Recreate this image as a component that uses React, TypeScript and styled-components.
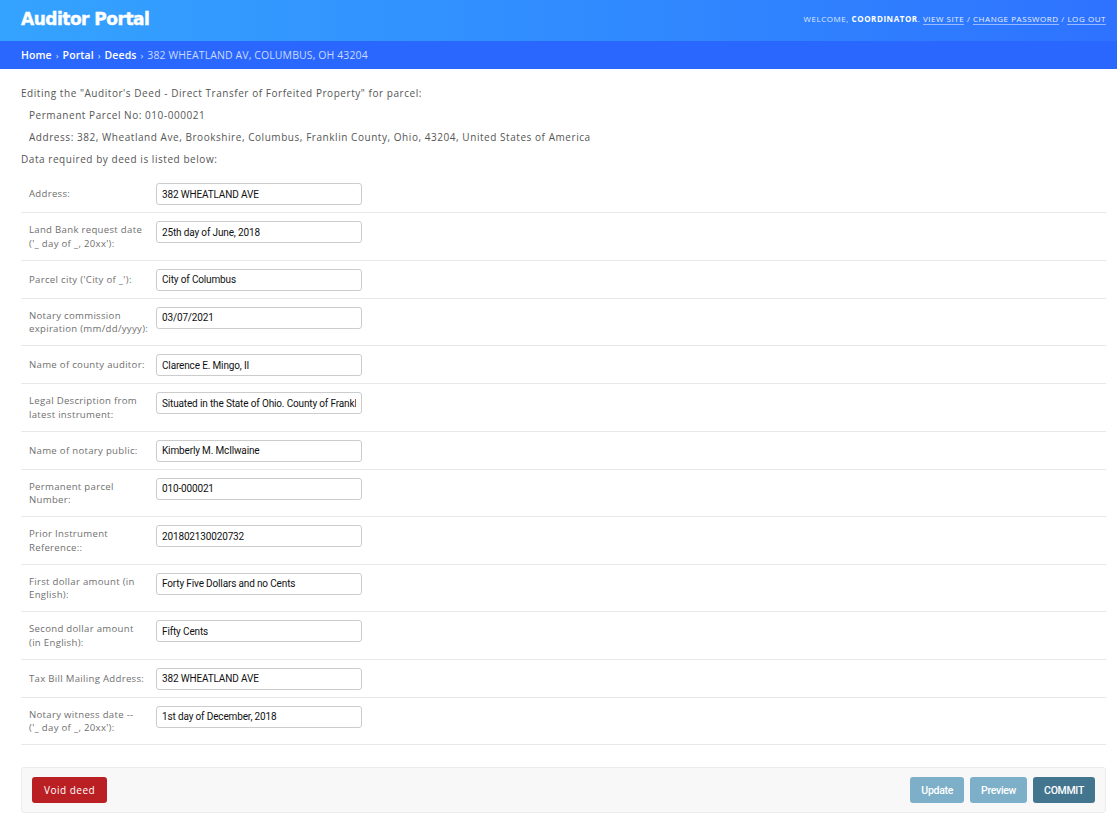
import React from "react";
import styled, { createGlobalStyle } from "styled-components";

const Global = createGlobalStyle`
  html, body { margin: 0; padding: 0; background: #fff; }
  body { font-family: "Open Sans", "DejaVu Sans", sans-serif; }
  * { box-sizing: border-box; }
`;

const Header = styled.header`
  height: 41px;
  background: linear-gradient(90deg, #34a3fe 0%, #3088ff 60%, #2e72ff 100%);
  display: flex;
  align-items: center;
  justify-content: space-between;
  padding: 0 11px 0 21px;
`;

const Brand = styled.h1`
  margin: 0;
  font-family: "DejaVu Sans", sans-serif;
  font-weight: 700;
  font-size: 17px;
  color: #fff;
  letter-spacing: -0.5px;
  margin-top: -3px;
  -webkit-text-stroke: 0.4px #fff;
`;

const UserTools = styled.div`
  font-family: "Open Sans", sans-serif;
  font-size: 8px;
  letter-spacing: 0.55px;
  text-transform: uppercase;
  color: #dfe8ff;
  margin-top: -4px;
  strong { color: #fff; font-weight: 700; }
  a {
    color: #e8efff;
    text-decoration: none;
    border-bottom: 1px solid rgba(220, 230, 255, 0.6);
  }
`;

const Crumbs = styled.nav`
  height: 28px;
  background: #2a67ff;
  display: flex;
  align-items: center;
  padding: 0 21px;
  font-family: "Open Sans", sans-serif;
  font-size: 10.5px;
  letter-spacing: 0.1px;
  color: #c9d9ff;
  a { color: #fff; text-decoration: none; font-weight: 600; }
`;

const Sep = styled.span`
  margin: 0 4px;
  color: #d8e4ff;
  font-size: 9px;
`;

const Main = styled.main`
  padding: 17px 11px 0 21px;
  font-family: "Open Sans", sans-serif;
  font-size: 10px;
  color: #555;
`;

const Para = styled.p<{ $indent?: boolean }>`
  margin: 0;
  height: 22px;
  line-height: 14px;
  padding-left: ${(p) => (p.$indent ? "8px" : "0")};
  letter-spacing: 0.55px;
`;

const Form = styled.div`
  margin-top: 1px;
`;

const Row = styled.div`
  display: grid;
  grid-template-columns: 135px 1fr;
  border-bottom: 1px solid #e8e8e8;
`;

const Label = styled.label`
  align-self: center;
  padding: 10px 2px 9px 8px;
  line-height: 13.75px;
  color: #707070;
  letter-spacing: 0.3px;
  font-size: 9.6px;
  white-space: pre-line;
`;

const Field = styled.div`
  align-self: start;
  padding: 8px 0 7px 0;
`;

const Input = styled.input`
  width: 206px;
  height: 22px;
  border: 1px solid #cccccc;
  border-radius: 3px;
  padding: 0 5px;
  font-family: Roboto, "Liberation Sans", sans-serif;
  font-size: 10px;
  color: #111;
  letter-spacing: -0.15px;
  outline: none;
  display: block;
`;

const Submit = styled.div`
  margin-top: 22px;
  height: 46px;
  background: #f8f8f8;
  border: 1px solid #ececec;
  border-radius: 3px;
  display: flex;
  align-items: center;
  justify-content: space-between;
  padding: 0 10px;
`;

const Group = styled.div`
  display: flex;
  gap: 6px;
`;

const Button = styled.button<{ $tone: "danger" | "light" | "dark" }>`
  height: 26px;
  border: none;
  border-radius: 3px;
  padding: 0 ${(p) => (p.$tone === "danger" ? "12px" : "11px")};
  color: #fff;
  font-family: ${(p) => (p.$tone === "danger" ? `"Open Sans", sans-serif` : `Roboto, sans-serif`)};
  font-weight: ${(p) => (p.$tone === "danger" ? 400 : 500)};
  font-size: ${(p) => (p.$tone === "danger" ? "10px" : "10.5px")};
  letter-spacing: ${(p) => (p.$tone === "danger" ? "0.5px" : "-0.3px")};
  background: ${(p) =>
    p.$tone === "danger" ? "#ba1f24" : p.$tone === "light" ? "#7eafc9" : "#44758f"};
  cursor: pointer;
`;

const fields: [string, string][] = [
  ["Address:", "382 WHEATLAND AVE"],
  ["Land Bank request date\n('_ day of _, 20xx'):", "25th day of June, 2018"],
  ["Parcel city ('City of _'):", "City of Columbus"],
  ["Notary commission\nexpiration (mm/dd/yyyy):", "03/07/2021"],
  ["Name of county auditor:", "Clarence E. Mingo, II"],
  ["Legal Description from\nlatest instrument:", "Situated in the State of Ohio. County of Franklin"],
  ["Name of notary public:", "Kimberly M. McIlwaine"],
  ["Permanent parcel\nNumber:", "010-000021"],
  ["Prior Instrument\nReference::", "201802130020732"],
  ["First dollar amount (in\nEnglish):", "Forty Five Dollars and no Cents"],
  ["Second dollar amount\n(in English):", "Fifty Cents"],
  ["Tax Bill Mailing Address:", "382 WHEATLAND AVE"],
  ["Notary witness date --\n('_ day of _, 20xx'):", "1st day of December, 2018"],
];

export default function App() {
  return (
    <>
      <Global />
      <Header>
        <Brand>Auditor Portal</Brand>
        <UserTools>
          Welcome, <strong>Coordinator</strong>. <a href="#">View site</a> / <a href="#">Change password</a> /{" "}
          <a href="#">Log out</a>
        </UserTools>
      </Header>
      <Crumbs>
        <a href="#">Home</a>
        <Sep>›</Sep>
        <a href="#">Portal</a>
        <Sep>›</Sep>
        <a href="#">Deeds</a>
        <Sep>›</Sep>
        382 WHEATLAND AV, COLUMBUS, OH 43204
      </Crumbs>
      <Main>
        <Para>Editing the "Auditor's Deed - Direct Transfer of Forfeited Property" for parcel:</Para>
        <Para $indent>Permanent Parcel No: 010-000021</Para>
        <Para $indent>Address: 382, Wheatland Ave, Brookshire, Columbus, Franklin County, Ohio, 43204, United States of America</Para>
        <Para>Data required by deed is listed below:</Para>
        <Form>
          {fields.map(([label, value], i) => (
            <Row key={i}>
              <Label>{label}</Label>
              <Field>
                <Input defaultValue={value} />
              </Field>
            </Row>
          ))}
        </Form>
        <Submit>
          <Button $tone="danger">Void deed</Button>
          <Group>
            <Button $tone="light">Update</Button>
            <Button $tone="light">Preview</Button>
            <Button $tone="dark">COMMIT</Button>
          </Group>
        </Submit>
      </Main>
    </>
  );
}
